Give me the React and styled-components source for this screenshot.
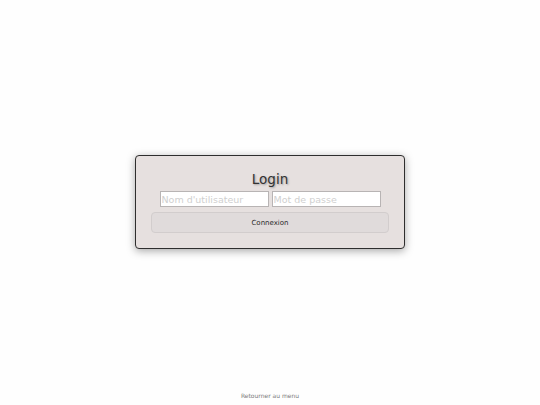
import React from "react"
import styled, { createGlobalStyle } from "styled-components"

const GlobalStyle = createGlobalStyle`
  html, body {
    margin: 0;
    padding: 0;
    background: #fefefe;
    font-family: "DejaVu Sans", "Liberation Sans", sans-serif;
  }
`

const Page = styled.div`
  height: 405px;
  display: flex;
  flex-direction: column;
  align-items: center;
`

const Main = styled.main`
  flex: 1;
  display: flex;
  align-items: center;
  justify-content: center;
  padding-top: 12px;
`

const Card = styled.form`
  box-sizing: border-box;
  width: 270px;
  height: 94px;
  padding: 14px 15px 0;
  background: #e6e0df;
  border: 1.5px solid #2e2e2e;
  border-radius: 4px;
  box-shadow: 0 2px 8px rgba(0, 0, 0, 0.35);
  display: flex;
  flex-direction: column;
  align-items: center;
`

const Title = styled.h1`
  margin: 0;
  font-size: 13.5px;
  font-weight: normal;
  line-height: 18px;
  color: #333333;
  text-shadow: 1px 1px 2px rgba(0, 0, 0, 0.3);
`

const Fields = styled.div`
  display: flex;
  gap: 3px;
  margin-top: 3px;
`

const Input = styled.input`
  box-sizing: border-box;
  width: 109px;
  height: 16px;
  padding: 0 1px;
  border: 1px solid #b8b4b4;
  background: #ffffff;
  font-family: inherit;
  font-size: 9.5px;
  outline: none;
  &::placeholder {
    color: #cfcfcf;
  }
`

const Button = styled.button`
  box-sizing: border-box;
  width: 238px;
  height: 21px;
  margin-top: 5px;
  border: 1px solid #d2cdcd;
  border-radius: 4px;
  background: #e0dbdb;
  color: #2a2a2a;
  font-family: inherit;
  font-size: 7px;
  cursor: pointer;
`

const Footer = styled.a`
  font-size: 6px;
  color: #7a7a7a;
  text-decoration: none;
  margin-bottom: 6px;
`

export default function App() {
  return (
    <>
      <GlobalStyle />
      <Page>
        <Main>
          <Card onSubmit={(e) => e.preventDefault()}>
            <Title>Login</Title>
            <Fields>
              <Input type="text" placeholder="Nom d'utilisateur" />
              <Input type="password" placeholder="Mot de passe" />
            </Fields>
            <Button type="submit">Connexion</Button>
          </Card>
        </Main>
        <Footer href="#">Retourner au menu</Footer>
      </Page>
    </>
  )
}
